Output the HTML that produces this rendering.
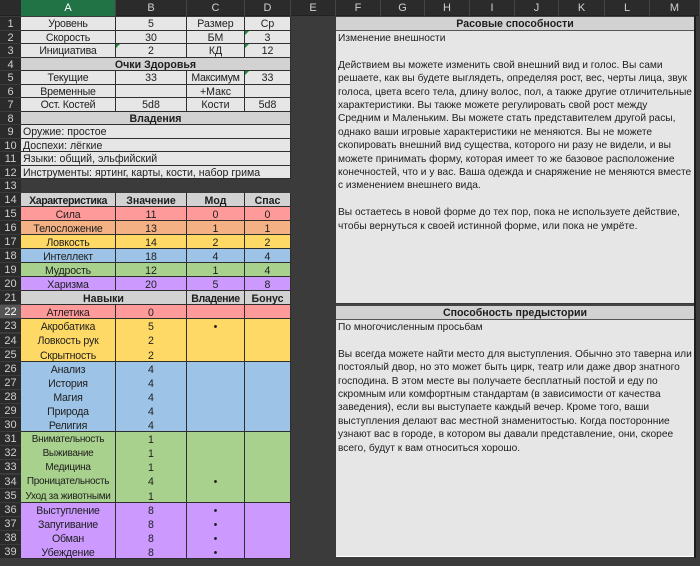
<!DOCTYPE html>
<html><head><meta charset="utf-8"><style>
*{box-sizing:border-box;margin:0;padding:0}
html,body{width:700px;height:566px;overflow:hidden}
body{background:#3b3b3b;position:relative;font-family:"Liberation Sans","DejaVu Sans",sans-serif;font-size:11px;color:#1e1e1e}
.hdr{position:absolute;left:0;top:0;width:700px;height:16px;background:#2b2b2b;border-bottom:1px solid #222}
.ch{position:absolute;top:0;height:16px;line-height:16px;text-align:center;color:#d0d0d0;font-size:11px;border-right:1px solid #444}
.rn{position:absolute;left:0;width:21px;text-align:center;color:#cfcfcf;background:#2b2b2b;font-size:11px;border-bottom:1px solid #3c3c3c}
.c{position:absolute;text-align:center;white-space:nowrap;overflow:hidden;border-right:1px solid #2e2e2e;border-bottom:1px solid #2e2e2e;background:#e6e6e6;font-size:10.6px;padding-top:1px}
.a{left:21px;width:95px;letter-spacing:-0.2px}.b{left:116px;width:71px}.cc{left:187px;width:58px}.d{left:245px;width:46px}.ad{left:21px;width:270px}.ab{left:21px;width:166px}
.g{background:#d2d2d2;font-weight:bold}
.l{text-align:left;padding-left:2px}
.red{background:#ff9a9a}.org{background:#f4b183}.yel{background:#ffd966}.blu{background:#9dc3e6}.grn{background:#a9d18e}.pur{background:#cc99ff}
.tri{position:absolute;left:0;top:0;width:0;height:0;border-top:4px solid #1e8a3c;border-right:4px solid transparent}
.box{position:absolute;left:336px;width:358px;background:#e6e6e6;font-size:10.2px;line-height:13.4px;padding-left:2px;white-space:nowrap;overflow:hidden}
.bh{position:absolute;left:336px;width:358px;background:#d2d2d2;font-weight:bold;text-align:center;border-top:2px solid #444;border-bottom:1px solid #555;font-size:10.6px}
</style></head><body>
<div class="hdr"></div>
<div class="ch" style="left:0;width:21px;border-right:none"></div>
<div class="ch" style="left:21px;width:95px;background:#217346;color:#fff">A</div>
<div class="ch" style="left:116px;width:71px">B</div>
<div class="ch" style="left:187px;width:58px">C</div>
<div class="ch" style="left:245px;width:46px">D</div>
<div class="ch" style="left:291px;width:45px">E</div>
<div class="ch" style="left:336px;width:45px">F</div>
<div class="ch" style="left:381px;width:44px">G</div>
<div class="ch" style="left:425px;width:45px">H</div>
<div class="ch" style="left:470px;width:45px">I</div>
<div class="ch" style="left:515px;width:44px">J</div>
<div class="ch" style="left:559px;width:46px">K</div>
<div class="ch" style="left:605px;width:45px">L</div>
<div class="ch" style="left:650px;width:50px">M</div>

<div class="rn" style="top:17px;height:13.5px;line-height:14px">1</div>
<div class="rn" style="top:30.5px;height:13.5px;line-height:14px">2</div>
<div class="rn" style="top:44px;height:13.5px;line-height:14px">3</div>
<div class="rn" style="top:57.5px;height:13.5px;line-height:14px">4</div>
<div class="rn" style="top:71px;height:13.5px;line-height:14px">5</div>
<div class="rn" style="top:84.5px;height:13.5px;line-height:14px">6</div>
<div class="rn" style="top:98px;height:13.5px;line-height:14px">7</div>
<div class="rn" style="top:111.5px;height:13.5px;line-height:14px">8</div>
<div class="rn" style="top:125px;height:13.5px;line-height:14px">9</div>
<div class="rn" style="top:138.5px;height:13.5px;line-height:14px">10</div>
<div class="rn" style="top:152px;height:13.5px;line-height:14px">11</div>
<div class="rn" style="top:165.5px;height:13.5px;line-height:14px">12</div>
<div class="rn" style="top:179px;height:13.5px;line-height:14px">13</div>
<div class="rn" style="top:192.5px;height:14.1px;line-height:15px">14</div>
<div class="rn" style="top:206.6px;height:14.1px;line-height:15px">15</div>
<div class="rn" style="top:220.7px;height:14.1px;line-height:15px">16</div>
<div class="rn" style="top:234.8px;height:14.1px;line-height:15px">17</div>
<div class="rn" style="top:248.9px;height:14.1px;line-height:15px">18</div>
<div class="rn" style="top:263px;height:14.1px;line-height:15px">19</div>
<div class="rn" style="top:277.1px;height:14.1px;line-height:15px">20</div>
<div class="rn" style="top:291.2px;height:14.1px;line-height:15px">21</div>
<div class="rn" style="top:305.3px;height:14.1px;line-height:15px;background:#555;color:#fff">22</div>
<div class="rn" style="top:319.4px;height:14.1px;line-height:15px">23</div>
<div class="rn" style="top:333.5px;height:14.1px;line-height:15px">24</div>
<div class="rn" style="top:347.6px;height:14.1px;line-height:15px">25</div>
<div class="rn" style="top:361.7px;height:14.1px;line-height:15px">26</div>
<div class="rn" style="top:375.8px;height:14.1px;line-height:15px">27</div>
<div class="rn" style="top:389.9px;height:14.1px;line-height:15px">28</div>
<div class="rn" style="top:404px;height:14.1px;line-height:15px">29</div>
<div class="rn" style="top:418.1px;height:14.1px;line-height:15px">30</div>
<div class="rn" style="top:432.2px;height:14.1px;line-height:15px">31</div>
<div class="rn" style="top:446.3px;height:14.1px;line-height:15px">32</div>
<div class="rn" style="top:460.4px;height:14.1px;line-height:15px">33</div>
<div class="rn" style="top:474.5px;height:14.1px;line-height:15px">34</div>
<div class="rn" style="top:488.6px;height:14.1px;line-height:15px">35</div>
<div class="rn" style="top:502.7px;height:14.1px;line-height:15px">36</div>
<div class="rn" style="top:516.8px;height:14.1px;line-height:15px">37</div>
<div class="rn" style="top:530.9px;height:14.1px;line-height:15px">38</div>
<div class="rn" style="top:545px;height:14.1px;line-height:15px">39</div>

<div class="c a" style="top:17px;height:13.5px;line-height:13px">Уровень</div><div class="c b" style="top:17px;height:13.5px;line-height:13px">5</div><div class="c cc" style="top:17px;height:13.5px;line-height:13px">Размер</div><div class="c d" style="top:17px;height:13.5px;line-height:13px">Ср</div>
<div class="c a" style="top:30.5px;height:13.5px;line-height:13px">Скорость</div><div class="c b" style="top:30.5px;height:13.5px;line-height:13px">30</div><div class="c cc" style="top:30.5px;height:13.5px;line-height:13px">БМ</div><div class="c d" style="top:30.5px;height:13.5px;line-height:13px"><span class="tri"></span>3</div>
<div class="c a" style="top:44px;height:13.5px;line-height:13px">Инициатива</div><div class="c b" style="top:44px;height:13.5px;line-height:13px"><span class="tri"></span>2</div><div class="c cc" style="top:44px;height:13.5px;line-height:13px">КД</div><div class="c d" style="top:44px;height:13.5px;line-height:13px"><span class="tri"></span>12</div>
<div class="c ad g" style="top:57.5px;height:13.5px;line-height:13px">Очки Здоровья</div>
<div class="c a" style="top:71px;height:13.5px;line-height:13px">Текущие</div><div class="c b" style="top:71px;height:13.5px;line-height:13px">33</div><div class="c cc" style="top:71px;height:13.5px;line-height:13px;letter-spacing:-0.3px">Максимум</div><div class="c d" style="top:71px;height:13.5px;line-height:13px"><span class="tri"></span>33</div>
<div class="c a" style="top:84.5px;height:13.5px;line-height:13px">Временные</div><div class="c b" style="top:84.5px;height:13.5px;line-height:13px"></div><div class="c cc" style="top:84.5px;height:13.5px;line-height:13px">+Макс</div><div class="c d" style="top:84.5px;height:13.5px;line-height:13px"></div>
<div class="c a" style="top:98px;height:13.5px;line-height:13px">Ост. Костей</div><div class="c b" style="top:98px;height:13.5px;line-height:13px">5d8</div><div class="c cc" style="top:98px;height:13.5px;line-height:13px">Кости</div><div class="c d" style="top:98px;height:13.5px;line-height:13px">5d8</div>
<div class="c ad g" style="top:111.5px;height:13.5px;line-height:13px">Владения</div>
<div class="c ad l" style="top:125px;height:13.5px;line-height:13px">Оружие: простое</div>
<div class="c ad l" style="top:138.5px;height:13.5px;line-height:13px">Доспехи: лёгкие</div>
<div class="c ad l" style="top:152px;height:13.5px;line-height:13px">Языки: общий, эльфийский</div>
<div class="c ad l" style="top:165.5px;height:13.5px;line-height:13px">Инструменты: яртинг, карты, кости, набор грима</div>

<div class="c a g" style="top:192.5px;height:14.1px;line-height:14px;letter-spacing:-0.4px">Характеристика</div><div class="c b g" style="top:192.5px;height:14.1px;line-height:14px">Значение</div><div class="c cc g" style="top:192.5px;height:14.1px;line-height:14px">Мод</div><div class="c d g" style="top:192.5px;height:14.1px;line-height:14px">Спас</div>
<div class="c a red" style="top:206.6px;height:14.1px;line-height:14px">Сила</div><div class="c b red" style="top:206.6px;height:14.1px;line-height:14px">11</div><div class="c cc red" style="top:206.6px;height:14.1px;line-height:14px">0</div><div class="c d red" style="top:206.6px;height:14.1px;line-height:14px">0</div>
<div class="c a org" style="top:220.7px;height:14.1px;line-height:14px">Телосложение</div><div class="c b org" style="top:220.7px;height:14.1px;line-height:14px">13</div><div class="c cc org" style="top:220.7px;height:14.1px;line-height:14px">1</div><div class="c d org" style="top:220.7px;height:14.1px;line-height:14px">1</div>
<div class="c a yel" style="top:234.8px;height:14.1px;line-height:14px">Ловкость</div><div class="c b yel" style="top:234.8px;height:14.1px;line-height:14px">14</div><div class="c cc yel" style="top:234.8px;height:14.1px;line-height:14px">2</div><div class="c d yel" style="top:234.8px;height:14.1px;line-height:14px">2</div>
<div class="c a blu" style="top:248.9px;height:14.1px;line-height:14px">Интеллект</div><div class="c b blu" style="top:248.9px;height:14.1px;line-height:14px">18</div><div class="c cc blu" style="top:248.9px;height:14.1px;line-height:14px">4</div><div class="c d blu" style="top:248.9px;height:14.1px;line-height:14px">4</div>
<div class="c a grn" style="top:263px;height:14.1px;line-height:14px">Мудрость</div><div class="c b grn" style="top:263px;height:14.1px;line-height:14px">12</div><div class="c cc grn" style="top:263px;height:14.1px;line-height:14px">1</div><div class="c d grn" style="top:263px;height:14.1px;line-height:14px">4</div>
<div class="c a pur" style="top:277.1px;height:14.1px;line-height:14px">Харизма</div><div class="c b pur" style="top:277.1px;height:14.1px;line-height:14px">20</div><div class="c cc pur" style="top:277.1px;height:14.1px;line-height:14px">5</div><div class="c d pur" style="top:277.1px;height:14.1px;line-height:14px">8</div>
<div class="c ab g" style="top:291.2px;height:14.1px;line-height:14px">Навыки</div><div class="c cc g" style="top:291.2px;height:14.1px;line-height:14px;letter-spacing:-0.4px">Владение</div><div class="c d g" style="top:291.2px;height:14.1px;line-height:14px">Бонус</div>

<div class="c a red" style="top:305.3px;height:14.1px;line-height:14px">Атлетика</div><div class="c b red" style="top:305.3px;height:14.1px;line-height:14px">0</div><div class="c cc red" style="top:305.3px;height:14.1px"></div><div class="c d red" style="top:305.3px;height:14.1px"></div>

<div class="c a yel" style="top:319.4px;height:42.3px;line-height:14.1px">Акробатика<br>Ловкость рук<br>Скрытность</div><div class="c b yel" style="top:319.4px;height:42.3px;line-height:14.1px">5<br>2<br>2</div><div class="c cc yel" style="top:319.4px;height:42.3px;line-height:14.1px">•</div><div class="c d yel" style="top:319.4px;height:42.3px"></div>

<div class="c a blu" style="top:361.7px;height:70.5px;line-height:14.1px">Анализ<br>История<br>Магия<br>Природа<br>Религия</div><div class="c b blu" style="top:361.7px;height:70.5px;line-height:14.1px">4<br>4<br>4<br>4<br>4</div><div class="c cc blu" style="top:361.7px;height:70.5px"></div><div class="c d blu" style="top:361.7px;height:70.5px"></div>

<div class="c a grn" style="top:432.2px;height:70.5px;line-height:14.1px;font-size:10px;letter-spacing:-0.3px">Внимательность<br>Выживание<br>Медицина<br>Проницательность<br>Уход за животными</div><div class="c b grn" style="top:432.2px;height:70.5px;line-height:14.1px">1<br>1<br>1<br>4<br>1</div><div class="c cc grn" style="top:432.2px;height:70.5px;line-height:14.1px">&nbsp;<br>&nbsp;<br>&nbsp;<br>•</div><div class="c d grn" style="top:432.2px;height:70.5px"></div>

<div class="c a pur" style="top:502.7px;height:56.4px;line-height:14.1px">Выступление<br>Запугивание<br>Обман<br>Убеждение</div><div class="c b pur" style="top:502.7px;height:56.4px;line-height:14.1px">8<br>8<br>8<br>8</div><div class="c cc pur" style="top:502.7px;height:56.4px;line-height:14.1px">•<br>•<br>•<br>•</div><div class="c d pur" style="top:502.7px;height:56.4px"></div>

<div class="bh" style="top:16px;height:15px;line-height:14px;border-top:1px solid #444">Расовые способности</div>
<div class="box" style="top:31px;height:272px;padding-top:1px">Изменение внешности<br><br>Действием вы можете изменить свой внешний вид и голос. Вы сами<br>решаете, как вы будете выглядеть, определяя рост, вес, черты лица, звук<br>голоса, цвета всего тела, длину волос, пол, а также другие отличительные<br>характеристики. Вы также можете регулировать свой рост между<br>Средним и Маленьким. Вы можете стать представителем другой расы,<br>однако ваши игровые характеристики не меняются. Вы не можете<br>скопировать внешний вид существа, которого ни разу не видели, и вы<br>можете принимать форму, которая имеет то же базовое расположение<br>конечностей, что и у вас. Ваша одежда и снаряжение не меняются вместе<br>с изменением внешнего вида.<br><br>Вы остаетесь в новой форме до тех пор, пока не используете действие,<br>чтобы вернуться к своей истинной форме, или пока не умрёте.</div>
<div class="bh" style="top:304px;height:16px;line-height:14px">Способность предыстории</div>
<div class="box" style="top:320px;height:236px;padding-top:1px">По многочисленным просьбам<br><br>Вы всегда можете найти место для выступления. Обычно это таверна или<br>постоялый двор, но это может быть цирк, театр или даже двор знатного<br>господина. В этом месте вы получаете бесплатный постой и еду по<br>скромным или комфортным стандартам (в зависимости от качества<br>заведения), если вы выступаете каждый вечер. Кроме того, ваши<br>выступления делают вас местной знаменитостью. Когда посторонние<br>узнают вас в городе, в котором вы давали представление, они, скорее<br>всего, будут к вам относиться хорошо.</div>
<div style="position:absolute;left:336px;top:556px;width:358px;height:1px;background:#fff"></div>
<div style="position:absolute;left:694px;top:16px;width:2px;height:542px;background:#1e1e1e"></div>
</body></html>
